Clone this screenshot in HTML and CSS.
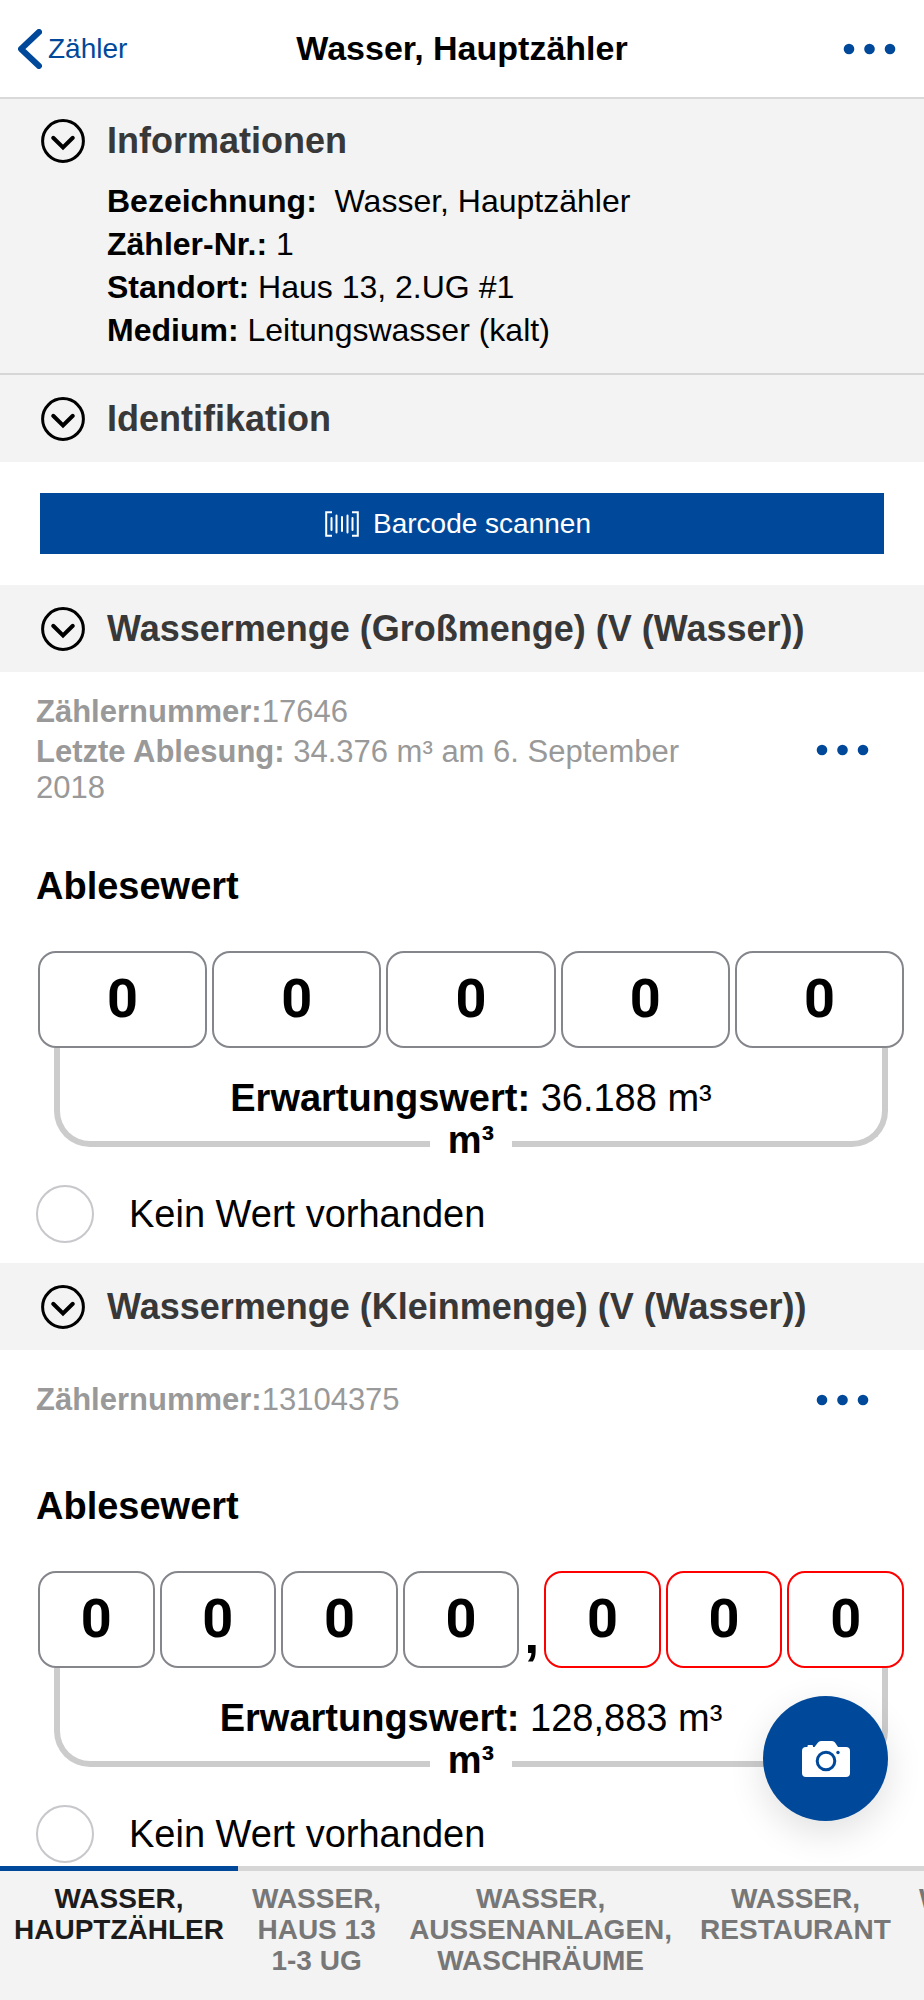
FILE: index.html
```html
<!DOCTYPE html>
<html lang="de">
<head>
<meta charset="utf-8">
<meta name="viewport" content="width=device-width, initial-scale=1">
<title>Wasser, Hauptzähler</title>
<link rel="stylesheet" href="styles.css">
</head>
<body>
<svg class="sprite" aria-hidden="true">
  <symbol id="chevron" viewBox="0 0 44 44">
    <circle cx="22" cy="22" r="20.4" fill="none" stroke="currentColor" stroke-width="3"/>
    <path d="M12.2 18.8 22 28.4l9.8-9.6" fill="none" stroke="currentColor" stroke-width="4" stroke-linecap="round"/>
  </symbol>
  <symbol id="dots" viewBox="0 0 53 12">
    <circle cx="6" cy="6" r="5.3" fill="currentColor"/>
    <circle cx="26.5" cy="6" r="5.3" fill="currentColor"/>
    <circle cx="47" cy="6" r="5.3" fill="currentColor"/>
  </symbol>
</svg>

<header class="topbar">
  <a class="back" href="#">
    <svg class="back-icon" viewBox="0 0 24 40" aria-hidden="true"><path d="M21 3 3 20l18 17" fill="none" stroke="currentColor" stroke-width="6" stroke-linecap="round" stroke-linejoin="round"/></svg>
    Zähler
  </a>
  <h1 class="title">Wasser, Hauptzähler</h1>
  <button class="more" type="button" aria-label="Menü"><svg class="dots"><use href="#dots"/></svg></button>
</header>

<main class="content">
  <section class="info">
    <h2 class="section-title section-title-info"><button class="toggle" type="button"><svg class="chevron"><use href="#chevron"/></svg>Informationen</button></h2>
    <div class="info-rows">
      <p><b>Bezeichnung:</b>&nbsp; Wasser, Hauptzähler</p>
      <p><b>Zähler-Nr.:</b> 1</p>
      <p><b>Standort:</b> Haus 13, 2.UG #1</p>
      <p><b>Medium:</b> Leitungswasser (kalt)</p>
    </div>
  </section>

  <section>
    <h2 class="section-title"><button class="toggle" type="button"><svg class="chevron"><use href="#chevron"/></svg>Identifikation</button></h2>
    <div class="scan-area">
      <button class="scan" type="button">
        <svg class="barcode" viewBox="0 0 34 26" fill="none" stroke="currentColor" stroke-width="2" aria-hidden="true">
          <path d="M7 1.2H1.2v23.6H7M27 1.2h5.8v23.6H27"/>
          <path d="M6.5 7v12M11.5 4.500v17M17 6v14M22.500 4.500v17M27.500 7v12" stroke-linecap="round"/>
        </svg>
        Barcode scannen
      </button>
    </div>
  </section>

  <section>
    <h2 class="section-title"><button class="toggle" type="button"><svg class="chevron"><use href="#chevron"/></svg>Wassermenge (Großmenge) (V (Wasser))</button></h2>
    <div class="meter">
      <div class="meta">
        <div class="meta-text">
          <p><b>Zählernummer:</b>17646</p>
          <p><b>Letzte Ablesung:</b> 34.376 m³ am 6. September 2018</p>
        </div>
        <button class="more" type="button" aria-label="Optionen Großmenge"><svg class="dots"><use href="#dots"/></svg></button>
      </div>
      <h3 class="reading-title">Ablesewert</h3>
      <div class="reading">
        <div class="digits">
          <input class="digit" type="text" value="0" aria-label="Stelle 1">
          <input class="digit" type="text" value="0" aria-label="Stelle 2">
          <input class="digit" type="text" value="0" aria-label="Stelle 3">
          <input class="digit" type="text" value="0" aria-label="Stelle 4">
          <input class="digit" type="text" value="0" aria-label="Stelle 5">
        </div>
        <div class="bracket">
          <p><b>Erwartungswert:</b> 36.188 m³</p>
          <b class="unit">m³</b>
        </div>
      </div>
      <label class="novalue"><input class="check" type="checkbox">Kein Wert vorhanden</label>
    </div>
  </section>

  <section>
    <h2 class="section-title"><button class="toggle" type="button"><svg class="chevron"><use href="#chevron"/></svg>Wassermenge (Kleinmenge) (V (Wasser))</button></h2>
    <div class="meter meter-last">
      <div class="meta">
        <div class="meta-text">
          <p><b>Zählernummer:</b>13104375</p>
        </div>
        <button class="more" type="button" aria-label="Optionen Kleinmenge"><svg class="dots"><use href="#dots"/></svg></button>
      </div>
      <h3 class="reading-title">Ablesewert</h3>
      <div class="reading">
        <div class="digits">
          <input class="digit" type="text" value="0" aria-label="Stelle 1">
          <input class="digit" type="text" value="0" aria-label="Stelle 2">
          <input class="digit" type="text" value="0" aria-label="Stelle 3">
          <input class="digit" type="text" value="0" aria-label="Stelle 4">
          <span class="comma">,</span>
          <input class="digit digit-decimal" type="text" value="0" aria-label="Nachkommastelle 1">
          <input class="digit digit-decimal" type="text" value="0" aria-label="Nachkommastelle 2">
          <input class="digit digit-decimal" type="text" value="0" aria-label="Nachkommastelle 3">
        </div>
        <div class="bracket">
          <p><b>Erwartungswert:</b> 128,883 m³</p>
          <b class="unit">m³</b>
        </div>
      </div>
      <label class="novalue"><input class="check" type="checkbox">Kein Wert vorhanden</label>
    </div>
  </section>
</main>

<button class="fab" type="button" aria-label="Foto aufnehmen">
  <svg class="camera" viewBox="0 0 48 36" aria-hidden="true">
    <path d="M4 6h1.500V5q0-1 1-1h3.500q1 0 1 1v1h1.500L16 1.500Q17 0 19 0h11q2 0 3 1.500L36 6h8q4 0 4 4v22q0 4-4 4H4q-4 0-4-4V10q0-4 4-4z" fill="#fff"/>
    <circle cx="24" cy="20" r="8.800" fill="none" stroke="#00499a" stroke-width="3"/>
    <circle cx="36" cy="11.500" r="1.700" fill="#00499a"/>
  </svg>
</button>

<nav class="tabs">
  <button class="tab tab-active" type="button">WASSER,<br>HAUPTZÄHLER</button>
  <button class="tab" type="button">WASSER,<br>HAUS 13<br>1-3 UG</button>
  <button class="tab" type="button">WASSER,<br>AUSSENANLAGEN,<br>WASCHRÄUME</button>
  <button class="tab" type="button">WASSER,<br>RESTAURANT</button>
  <button class="tab" type="button">WASSER,</button>
</nav>
</body>
</html>
```
FILE: styles.css
```css
* {
  box-sizing: border-box;
}

body {
  display: flex;
  flex-direction: column;
  min-height: 100vh;
  margin: 0;
  background: #fff;
  color: #000;
  font-family: "Liberation Sans", Arial, sans-serif;
}

h1, h2, h3, p {
  margin: 0;
}

button, input {
  margin: 0;
  padding: 0;
  border: 0;
  background: none;
  color: inherit;
  font: inherit;
}

.sprite {
  display: none;
}

.topbar {
  display: grid;
  grid-template-columns: 1fr auto 1fr;
  align-items: center;
  height: 99px;
  padding: 0 18px;
  border-bottom: 2px solid #d9d9d9;
}

.topbar .more {
  padding-right: 10px;
}

.back {
  display: flex;
  align-items: center;
  gap: 6px;
  color: #00499a;
  font-size: 28px;
  text-decoration: none;
}

.back-icon {
  width: 24px;
  height: 40px;
}

.title {
  font-size: 34px;
}

.more {
  display: flex;
  align-items: center;
  justify-content: flex-end;
  height: 52px;
  color: #00499a;
}

.dots {
  width: 53px;
  height: 12px;
}

.section-title {
  background: #f3f3f3;
  color: #383838;
  font-size: 36px;
}

.toggle {
  display: flex;
  align-items: center;
  gap: 22px;
  width: 100%;
  min-height: 87px;
  padding: 0 41px;
  font-weight: bold;
  text-align: left;
}

.section-title-info .toggle {
  min-height: 80px;
  padding-top: 4px;
}

.chevron {
  flex: none;
  width: 44px;
  height: 44px;
  color: #000;
}

.info {
  padding-bottom: 21px;
  border-bottom: 2px solid #d6d6d6;
  background: #f3f3f3;
}

.info-rows {
  padding: 1px 40px 0 107px;
  font-size: 32px;
  line-height: 43px;
}

.scan-area {
  padding: 31px 40px;
}

.scan {
  display: flex;
  align-items: center;
  justify-content: center;
  gap: 14px;
  width: 100%;
  min-height: 61px;
  padding-right: 8px;
  background: #00499a;
  color: #fff;
  font-size: 28px;
}

.barcode {
  width: 34px;
  height: 26px;
}

.meter {
  padding: 22px 20px 20px 36px;
}

.meter-last {
  padding-top: 24px;
  padding-bottom: 0;
}

.meta {
  display: grid;
  grid-template-columns: minmax(0, 5fr) 1fr;
  align-items: center;
  margin-bottom: 58px;
  padding-right: 35px;
}

.meta-text {
  display: grid;
  gap: 4px;
  color: #999;
  font-size: 31px;
  line-height: 36px;
}

.reading-title {
  margin-bottom: 43px;
  font-size: 38px;
  line-height: 44px;
}

.reading {
  padding-left: 2px;
}

.digits {
  display: flex;
  gap: 5px;
}

.digit {
  flex: 1 1 0;
  min-width: 0;
  height: 97px;
  padding-bottom: 2px;
  border: 2px solid #85868c;
  border-radius: 18px;
  background: #fff;
  font-family: Roboto, "Liberation Sans", sans-serif;
  font-size: 54px;
  font-weight: bold;
  text-align: center;
}

.digit-decimal {
  border-color: #f00;
}

.comma {
  align-self: flex-end;
  padding-bottom: 7px;
  font-size: 54px;
  font-weight: bold;
  line-height: 54px;
}

.bracket {
  position: relative;
  height: 99px;
  margin: 0 16px;
  padding-top: 28px;
  border: 6px solid #ccc;
  border-top: 0;
  border-radius: 0 0 36px 36px;
  font-size: 38px;
  line-height: 44px;
  text-align: center;
}

.unit {
  position: absolute;
  bottom: -21px;
  left: 50%;
  width: 82px;
  margin-left: -41px;
  background: #fff;
}

.novalue {
  display: flex;
  align-items: center;
  gap: 35px;
  margin-top: 38px;
  font-size: 38px;
}

.check {
  width: 58px;
  height: 58px;
  border: 2px solid #c7c7cc;
  border-radius: 50%;
  appearance: none;
}

.check:checked {
  background: #00499a;
}

.fab {
  position: fixed;
  right: 36px;
  bottom: 179px;
  display: flex;
  align-items: center;
  justify-content: center;
  width: 125px;
  height: 125px;
  border-radius: 50%;
  background: #00499a;
  box-shadow: 0 12px 36px rgba(0, 0, 0, 0.12);
}

.camera {
  width: 48px;
  height: 36px;
}

.tabs {
  position: sticky;
  bottom: 0;
  display: flex;
  min-height: 134px;
  margin-top: auto;
  overflow-x: auto;
  background: #f3f3f3;
  scrollbar-width: none;
}

.tab {
  display: flex;
  flex: none;
  justify-content: center;
  padding: 12px 14px 0;
  border-top: 5px solid #d6d6d6;
  color: #777;
  font-size: 28px;
  font-weight: bold;
  line-height: 31px;
  text-align: center;
}

.tab-active {
  border-color: #00499a;
  color: #1c1c1c;
}
```
